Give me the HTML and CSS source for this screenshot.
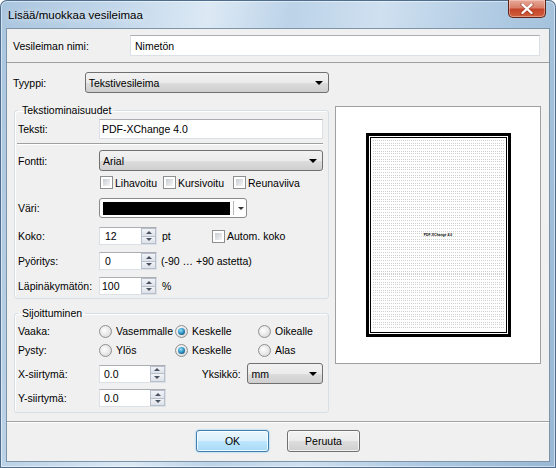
FILE: index.html
```html
<!DOCTYPE html>
<html lang="fi">
<head>
<meta charset="utf-8">
<title>Lisää/muokkaa vesileimaa</title>
<link rel="stylesheet" href="styles.css">
</head>
<body>
<div class="window">
  <div class="titlebar">
    <span class="title">Lisää/muokkaa vesileimaa</span>
    <div class="close">
      <svg width="14" height="12" viewBox="0 0 14 12"><path d="M2 1.5 L12 10.5 M12 1.5 L2 10.5" stroke="#5a1a10" stroke-width="3.6" stroke-linecap="round" opacity="0.35"/><path d="M2.5 1.5 L11.5 10 M11.5 1.5 L2.5 10" stroke="#fff" stroke-width="2.4" stroke-linecap="round"/></svg>
    </div>
  </div>
  <div class="client">
    <div class="name-row">
      <span class="lbl name-lbl">Vesileiman nimi:</span>
      <div class="textbox name-input">Nimetön</div>
    </div>
    <div class="body">
      <div class="left">
        <div class="type-row">
          <span class="lbl type-lbl">Tyyppi:</span>
          <div class="combo type-combo"><span>Tekstivesileima</span><span class="arrow"></span></div>
        </div>
        <fieldset class="group g1">
          <legend>Tekstiominaisuudet</legend>
          <div class="row h20">
            <span class="lbl col">Teksti:</span>
            <div class="textbox text-input">PDF-XChange 4.0</div>
          </div>
          <div class="sep"></div>
          <div class="row h21 mt5">
            <span class="lbl col">Fontti:</span>
            <div class="combo font-combo"><span>Arial</span><span class="arrow"></span></div>
          </div>
          <div class="row checks">
            <span class="check w63"><span class="cb"></span>Lihavoitu</span>
            <span class="check w70"><span class="cb"></span>Kursivoitu</span>
            <span class="check"><span class="cb"></span>Reunaviiva</span>
          </div>
          <div class="row h20 mt9">
            <span class="lbl col">Väri:</span>
            <div class="colorbox"><span class="swatch"></span><span class="cdiv"></span><span class="carrow"></span></div>
          </div>
          <div class="row h18 mt9">
            <span class="lbl col">Koko:</span>
            <div class="spin"><span class="val p5">12</span><span class="btns"><span class="up"></span><span class="dn"></span></span></div>
            <span class="unit w50">pt</span>
            <span class="check"><span class="cb"></span>Autom. koko</span>
          </div>
          <div class="row h18 mt7">
            <span class="lbl col">Pyöritys:</span>
            <div class="spin"><span class="val p5">0</span><span class="btns"><span class="up"></span><span class="dn"></span></span></div>
            <span class="unit unit-range">(-90 … +90 astetta)</span>
          </div>
          <div class="row h18 mt7">
            <span class="lbl col">Läpinäkymätön:</span>
            <div class="spin"><span class="val p2">100</span><span class="btns"><span class="up"></span><span class="dn"></span></span></div>
            <span class="unit">%</span>
          </div>
        </fieldset>
        <fieldset class="group g2">
          <legend>Sijoittuminen</legend>
          <div class="row radios mt1">
            <span class="lbl col">Vaaka:</span>
            <span class="radio w76"><span class="rb"></span>Vasemmalle</span>
            <span class="radio w83"><span class="rb on"></span>Keskelle</span>
            <span class="radio"><span class="rb"></span>Oikealle</span>
          </div>
          <div class="row radios mt3">
            <span class="lbl col">Pysty:</span>
            <span class="radio w76"><span class="rb"></span>Ylös</span>
            <span class="radio w83"><span class="rb on"></span>Keskelle</span>
            <span class="radio"><span class="rb"></span>Alas</span>
          </div>
          <div class="row h21 mt5">
            <span class="lbl col">X-siirtymä:</span>
            <div class="spin wide"><span class="val p4">0.0</span><span class="btns"><span class="up"></span><span class="dn"></span></span></div>
            <span class="lbl unit-lbl">Yksikkö:</span>
            <div class="combo unit-combo"><span>mm</span><span class="arrow"></span></div>
          </div>
          <div class="row h18 mt5">
            <span class="lbl col">Y-siirtymä:</span>
            <div class="spin wide"><span class="val p4">0.0</span><span class="btns"><span class="up"></span><span class="dn"></span></span></div>
          </div>
        </fieldset>
      </div>
      <div class="preview">
        <div class="page">
          <div class="page-inner">
            <div class="lines"><span class="mini">PDF-XChange 4.0</span></div>
          </div>
        </div>
      </div>
    </div>
    <div class="footer">
      <div class="btn default">OK</div>
      <div class="btn">Peruuta</div>
    </div>
  </div>
</div>
</body>
</html>
```

FILE: styles.css
```css
html, body {
  margin: 0;
  padding: 0;
  background: #ffffff;
}
body {
  font-family: "Liberation Sans", Arial, sans-serif;
  font-size: 10.5px;
  color: #000;
}
.window {
  width: 556px;
  height: 468px;
  box-sizing: border-box;
  padding: 0 7px 7px;
  display: flex;
  flex-direction: column;
  border-radius: 7px 7px 0 0;
  background: linear-gradient(100deg, #a9c5de 0%, #c2d7ea 18%, #dce9f5 33%, #bcd3e8 46%, #cfe0f0 60%, #afcae2 78%, #98b8d5 100%);
  box-shadow: inset 0 0 0 1px #4f6d8c, inset 0 0 0 2px rgba(255,255,255,0.5);
  overflow: hidden;
}
.titlebar {
  height: 29px;
  margin: 0 -7px;
  display: flex;
  align-items: flex-start;
  flex: none;
}
.title {
  padding-left: 8px;
  margin-top: 8px;
  font-size: 11.5px;
  line-height: 15px;
  color: #000;
  text-shadow: 0 0 6px rgba(255,255,255,0.9);
}
.close {
  margin-left: auto;
  margin-right: 10px;
  width: 38px;
  height: 18px;
  box-sizing: border-box;
  border: 1px solid #5d2419;
  border-top: none;
  border-radius: 0 0 5px 5px;
  background: linear-gradient(#e9a898 0%, #d9806b 45%, #c5442a 55%, #d0603c 100%);
  box-shadow: inset 0 0 0 1px rgba(255,220,210,0.45);
  display: flex;
  align-items: center;
  justify-content: center;
}
.client {
  flex: 1;
  background: #f0f0f0;
  display: flex;
  flex-direction: column;
  box-shadow: 0 0 0 1px #7d93a8;
}
.lbl {
  white-space: nowrap;
}
.name-row {
  height: 33px;
  border-bottom: 1px solid #a0a0a0;
  display: flex;
  align-items: center;
  padding-left: 6px;
  flex: none;
}
.name-lbl {
  width: 117px;
}
.textbox {
  box-sizing: border-box;
  background: #fff;
  border: 1px solid #dbdfe6;
  border-top-color: #abadb3;
  display: flex;
  align-items: center;
  white-space: nowrap;
}
.name-input {
  width: 410px;
  height: 21px;
  padding-left: 4px;
}
.body {
  flex: 1;
  display: flex;
  align-items: flex-start;
}
.left {
  width: 322px;
  flex: none;
}
.type-row {
  display: flex;
  align-items: center;
  margin-top: 9px;
  padding-left: 6px;
  height: 21px;
}
.type-lbl {
  width: 72px;
}
.combo {
  box-sizing: border-box;
  height: 21px;
  border: 1px solid #707070;
  border-radius: 3px;
  background: linear-gradient(#f2f2f2 0%, #ebebeb 50%, #dddddd 51%, #cfcfcf 100%);
  display: flex;
  align-items: center;
  padding-left: 3px;
  white-space: nowrap;
}
.combo .arrow {
  margin-left: auto;
  margin-right: 5px;
  width: 0;
  height: 0;
  border-left: 4px solid transparent;
  border-right: 4px solid transparent;
  border-top: 4px solid #000;
}
.type-combo {
  width: 245px;
}
.group {
  box-sizing: border-box;
  margin: 0 0 0 7px;
  width: 315px;
  min-width: 0;
  border: 1px solid #d5dfe5;
  border-radius: 3px;
  padding: 2px 5px 3px 3px;
  box-shadow: inset 1px 1px 0 #fff;
}
.group legend {
  padding: 0 3px 0 4px;
  margin: 0;
  line-height: 14px;
  height: 14px;
}
.g1 {
  margin-top: 10px;
}
.g2 {
  margin-top: 7px;
  padding-bottom: 5px;
}
.row {
  display: flex;
  align-items: center;
}
.h18 { height: 18px; }
.h20 { height: 20px; }
.h21 { height: 21px; }
.mt1 { margin-top: 1px; }
.mt3 { margin-top: 3px; }
.mt5 { margin-top: 5px; }
.mt7 { margin-top: 7px; }
.mt9 { margin-top: 9px; }
.col {
  width: 81px;
  flex: none;
}
.text-input {
  width: 224px;
  height: 20px;
  padding-left: 2px;
}
.sep {
  margin: 4px 0 0 -1px;
  height: 0;
  border-top: 1px solid #a0a0a0;
  border-bottom: 1px solid #fff;
}
.font-combo {
  width: 224px;
}
.checks {
  margin-top: 5px;
  height: 13px;
  padding-left: 82px;
}
.check {
  display: inline-flex;
  align-items: center;
  white-space: nowrap;
}
.w63 { width: 63px; }
.w70 { width: 70px; }
.w50 { width: 50px; }
.w76 { width: 76px; }
.w83 { width: 83px; }
.cb {
  width: 13px;
  height: 13px;
  box-sizing: border-box;
  border: 1px solid #8e8f8f;
  padding: 2px;
  background: linear-gradient(135deg, #c7cbd1, #f5f6f7) content-box, #fff;
  margin-right: 2px;
  flex: none;
}
.colorbox {
  box-sizing: border-box;
  width: 148px;
  height: 20px;
  border: 1px solid #8a8a8a;
  border-radius: 3px;
  background: #fff;
  display: flex;
  align-items: center;
  padding-left: 3px;
}
.swatch {
  width: 127px;
  height: 13px;
  background: #000;
}
.cdiv {
  margin-left: 3px;
  width: 1px;
  height: 14px;
  background: #b8b8b8;
}
.carrow {
  margin-left: 4px;
  width: 0;
  height: 0;
  border-left: 3px solid transparent;
  border-right: 3px solid transparent;
  border-top: 3px solid #333;
}
.spin {
  box-sizing: border-box;
  width: 58px;
  height: 18px;
  background: #fff;
  border: 1px solid #dbdfe6;
  border-top-color: #abadb3;
  display: flex;
}
.spin.wide {
  width: 67px;
}
.spin .val {
  flex: 1;
  display: flex;
  align-items: center;
}
.p2 { padding-left: 2px; }
.p4 { padding-left: 4px; }
.p5 { padding-left: 5px; }
.spin .btns {
  width: 15px;
  display: flex;
  flex-direction: column;
}
.spin .up, .spin .dn {
  flex: 1;
  box-sizing: border-box;
  border: 1px solid #b6bfcb;
  background: linear-gradient(#f1f3f6, #dde2e9);
  display: flex;
  align-items: center;
  justify-content: center;
}
.spin .dn {
  border-top: none;
}
.spin .up::after {
  content: "";
  border-left: 3px solid transparent;
  border-right: 3px solid transparent;
  border-bottom: 3px solid #4b5260;
}
.spin .dn::after {
  content: "";
  border-left: 3px solid transparent;
  border-right: 3px solid transparent;
  border-top: 3px solid #4b5260;
}
.unit {
  margin-left: 5px;
  white-space: nowrap;
}
.unit-range {
  margin-left: 4px;
}
.radios {
  height: 16px;
}
.radio {
  display: inline-flex;
  align-items: center;
  white-space: nowrap;
}
.rb {
  width: 13px;
  height: 13px;
  box-sizing: border-box;
  border-radius: 50%;
  border: 1px solid #8e8f8f;
  background: radial-gradient(circle at 40% 40%, #ffffff 0%, #e4e4e4 60%, #cfcfcf 100%);
  margin-right: 4px;
  flex: none;
  display: flex;
  align-items: center;
  justify-content: center;
}
.rb.on::after {
  content: "";
  width: 7px;
  height: 7px;
  border-radius: 50%;
  background: radial-gradient(circle at 40% 35%, #9fe0f6 0%, #3aa0cf 40%, #1c5f8a 75%, #173e5e 100%);
}
.unit-lbl {
  margin-left: 36px;
  width: 46px;
}
.unit-combo {
  width: 76px;
}
.preview {
  margin-top: 43px;
  margin-left: 6px;
  width: 206px;
  height: 258px;
  box-sizing: border-box;
  border: 1px solid #a0a0a0;
  background: #fff;
  display: flex;
  align-items: center;
  justify-content: center;
}
.page {
  width: 145px;
  height: 204px;
  box-sizing: border-box;
  border: 3px solid #000;
  padding: 1px;
  display: flex;
  background: #fff;
}
.page-inner {
  flex: 1;
  border: 1px solid #000;
  padding: 2px;
  display: flex;
}
.lines {
  flex: 1;
  display: flex;
  align-items: center;
  justify-content: center;
  background:
    repeating-linear-gradient(90deg, transparent 0 1px, #fff 1px 2px),
    repeating-linear-gradient(180deg, #cfcfcf 0 1px, #fff 1px 2.67px);
}
.mini {
  font-size: 3.4px;
  line-height: 3px;
  font-weight: bold;
  color: #000;
  white-space: nowrap;
}
.footer {
  flex: none;
  height: 31px;
  border-top: 1px solid #a0a0a0;
  box-shadow: inset 0 1px 0 #fff;
  display: flex;
  justify-content: center;
  align-items: flex-start;
  padding-top: 8px;
  gap: 18px;
}
.btn {
  width: 73px;
  height: 22px;
  box-sizing: border-box;
  border: 1px solid #707070;
  border-radius: 3px;
  background: linear-gradient(#f2f2f2 0%, #ebebeb 50%, #dddddd 51%, #cfcfcf 100%);
  box-shadow: inset 0 0 0 1px rgba(255,255,255,0.7);
  display: flex;
  align-items: center;
  justify-content: center;
}
.btn.default {
  border-color: #3c7fb1;
  background: linear-gradient(#eaf6fd 0%, #d9f0fc 50%, #bee6fd 51%, #a7d9f5 100%);
  box-shadow: inset 0 0 0 1px rgba(255,255,255,0.8), 0 0 2px #6fc1f0;
}
```
